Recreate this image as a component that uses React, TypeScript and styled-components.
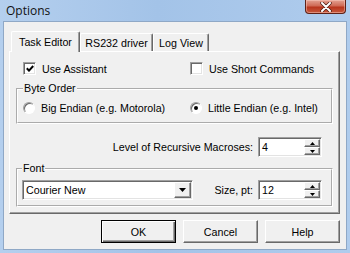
import React from 'react';
import styled, { createGlobalStyle } from 'styled-components';

const GlobalStyle = createGlobalStyle`
  html, body {
    margin: 0;
    padding: 0;
  }
  body {
    width: 350px;
    height: 253px;
    overflow: hidden;
    background: #a9c6e8;
  }
`;

const ui = `'Liberation Sans', Arial, sans-serif`;

const Window = styled.div`
  width: 350px;
  height: 253px;
  box-sizing: border-box;
  display: flex;
  flex-direction: column;
  background: linear-gradient(90deg, #b4cfee 0%, #a3c3e8 45%, #afcced 100%);
  font-family: ${ui};
  font-size: 10.7px;
  color: #000;
`;

const TitleBar = styled.div`
  height: 22px;
  flex: none;
  display: flex;
  align-items: flex-start;
  justify-content: space-between;
`;

const Title = styled.div`
  padding-left: 6px;
  line-height: 21px;
  font-family: 'Open Sans', 'Noto Sans', sans-serif;
  font-size: 12px;
  color: #111;
`;

const CloseButton = styled.div`
  width: 41px;
  height: 14px;
  margin-right: 4px;
  box-sizing: border-box;
  border: 1px solid #5e2117;
  border-top: none;
  border-radius: 0 0 4px 4px;
  background: linear-gradient(180deg, #e3a192 0%, #cf6a55 45%, #b8351d 55%, #c65a3e 100%);
  display: flex;
  align-items: center;
  justify-content: center;
  box-shadow: inset 0 0 0 1px rgba(255, 210, 200, 0.45);
`;

const Client = styled.div`
  flex: 1;
  margin: 0 4px 5px;
  padding: 9px 6px 6px 5px;
  background: #f0f0f0;
  box-shadow: 0 0 0 1px #8fa8c6;
  display: flex;
  flex-direction: column;
`;

const TabStrip = styled.div`
  display: flex;
  align-items: flex-end;
  padding-left: 2px;
`;

const Tab = styled.div<{ $active?: boolean; $w: number }>`
  position: relative;
  z-index: ${(p) => (p.$active ? 1 : 0)};
  width: ${(p) => p.$w}px;
  height: ${(p) => (p.$active ? 21 : 18)}px;
  margin-bottom: ${(p) => (p.$active ? -1 : 0)}px;
  box-sizing: border-box;
  display: flex;
  align-items: center;
  justify-content: center;
  background: #f0f0f0;
  border-top: 1px solid #fff;
  border-left: 1px solid #fff;
  border-right: 1px solid #696969;
  border-radius: 2px 2px 0 0;
  box-shadow: inset -1px 0 0 #a0a0a0;
  white-space: nowrap;
`;

const Panel = styled.div`
  border: 1px solid #fff;
  border-right-color: #696969;
  border-bottom-color: #696969;
  box-shadow: inset -1px -1px 0 #a0a0a0;
  padding: 0 6px 6px;
  display: flex;
  flex-direction: column;
`;

const CheckRow = styled.div`
  display: grid;
  grid-template-columns: 167px 1fr;
  padding-left: 7px;
  margin-top: 10px;
`;

const OptionLabel = styled.label`
  display: flex;
  align-items: center;
  gap: 6px;
  height: 13px;
  white-space: nowrap;
`;

const CheckBox = styled.span`
  width: 13px;
  height: 13px;
  box-sizing: border-box;
  background: #fff;
  border: 1px solid;
  border-color: #a0a0a0 #fff #fff #a0a0a0;
  box-shadow: inset 1px 1px 0 #696969, inset -1px -1px 0 #e3e3e3;
  display: flex;
  align-items: center;
  justify-content: center;
`;

const Radio = styled.span<{ $on?: boolean }>`
  width: 12px;
  height: 12px;
  box-sizing: border-box;
  border-radius: 50%;
  background: #fff;
  border: 1px solid;
  border-color: #a0a0a0 #fff #fff #a0a0a0;
  box-shadow: inset 1px 1px 0 #696969;
  display: flex;
  align-items: center;
  justify-content: center;
  &::after {
    content: '';
    display: ${(p) => (p.$on ? 'block' : 'none')};
    width: 4px;
    height: 4px;
    border-radius: 50%;
    background: #000;
  }
`;

const Group = styled.fieldset<{ $mt: number; $pad: string }>`
  margin: ${(p) => p.$mt}px 0 0;
  padding: ${(p) => p.$pad};
  border: 2px groove #fff;
  min-width: 0;
`;

const Legend = styled.legend`
  padding: 0 1px;
  line-height: 13px;
`;

const RadioRow = styled.div`
  display: grid;
  grid-template-columns: 167px 1fr;
`;

const FieldRow = styled.div<{ $mt?: number; $pr?: number }>`
  display: flex;
  align-items: center;
  margin-top: ${(p) => p.$mt ?? 0}px;
  padding-right: ${(p) => p.$pr ?? 0}px;
`;

const FieldLabel = styled.span`
  margin-left: auto;
  margin-right: 5px;
  white-space: nowrap;
`;

const Sunken = styled.div<{ $w: number }>`
  width: ${(p) => p.$w}px;
  height: 20px;
  box-sizing: border-box;
  background: #fff;
  border: 1px solid;
  border-color: #a0a0a0 #fff #fff #a0a0a0;
  box-shadow: inset 1px 1px 0 #696969, inset -1px -1px 0 #e3e3e3;
  padding: 2px 2px 2px 3px;
  display: flex;
  align-items: center;
`;

const FieldText = styled.span`
  flex: 1;
  line-height: 14px;
`;

const Spinner = styled.div`
  width: 16px;
  height: 16px;
  margin-right: -1px;
  display: flex;
  flex-direction: column;
`;

const SpinButton = styled.div`
  flex: 1;
  box-sizing: border-box;
  background: #f0f0f0;
  border: 1px solid;
  border-color: #fff #696969 #696969 #fff;
  box-shadow: inset -1px -1px 0 #a0a0a0;
  display: flex;
  align-items: center;
  justify-content: center;
`;

const DropButton = styled(SpinButton)`
  flex: none;
  width: 17px;
  height: 16px;
  margin-right: -1px;
`;

const ButtonRow = styled.div`
  display: flex;
  justify-content: flex-end;
  gap: 7px;
  margin-top: 6px;
`;

const Button = styled.div<{ $default?: boolean }>`
  width: 75px;
  height: 23px;
  box-sizing: border-box;
  border: 1px solid;
  border-color: ${(p) => (p.$default ? '#000' : '#fff #696969 #696969 #fff')};
  box-shadow: ${(p) =>
    p.$default
      ? 'inset 1px 1px 0 #fff, inset -1px -1px 0 #696969, inset -2px -2px 0 #a0a0a0'
      : 'inset -1px -1px 0 #a0a0a0'};
  background: #f0f0f0;
  display: flex;
  align-items: center;
  justify-content: center;
`;

const Arrow = ({ up }: { up?: boolean }) => (
  <svg width="5" height="3" viewBox="0 0 5 3">
    <path d={up ? 'M2.5 0 L5 3 L0 3 Z' : 'M0 0 L5 0 L2.5 3 Z'} fill="#000" />
  </svg>
);

const Spin = () => (
  <Spinner>
    <SpinButton>
      <Arrow up />
    </SpinButton>
    <SpinButton>
      <Arrow />
    </SpinButton>
  </Spinner>
);

export default function App() {
  return (
    <>
      <GlobalStyle />
      <Window>
        <TitleBar>
          <Title>Options</Title>
          <CloseButton>
            <svg width="12" height="10" viewBox="0 0 12 10">
              <path d="M2 1 L10 9 M10 1 L2 9" stroke="#4a1a12" strokeWidth="3.4" strokeLinecap="round" />
              <path d="M2 1 L10 9 M10 1 L2 9" stroke="#fff" strokeWidth="2" strokeLinecap="round" />
            </svg>
          </CloseButton>
        </TitleBar>
        <Client>
          <TabStrip>
            <Tab $active $w={69}>Task Editor</Tab>
            <Tab $w={73}>RS232 driver</Tab>
            <Tab $w={56}>Log View</Tab>
          </TabStrip>
          <Panel>
            <CheckRow>
              <OptionLabel>
                <CheckBox>
                  <svg width="8" height="7" viewBox="0 0 8 7">
                    <path d="M0.8 3.2 L3 5.6 L7.2 1" stroke="#000" strokeWidth="2" fill="none" />
                  </svg>
                </CheckBox>
                Use Assistant
              </OptionLabel>
              <OptionLabel>
                <CheckBox />
                Use Short Commands
              </OptionLabel>
            </CheckRow>
            <Group $mt={7} $pad="6px 0 8px 5px">
              <Legend>Byte Order</Legend>
              <RadioRow>
                <OptionLabel>
                  <Radio />
                  Big Endian (e.g. Motorola)
                </OptionLabel>
                <OptionLabel>
                  <Radio $on />
                  Little Endian (e.g. Intel)
                </OptionLabel>
              </RadioRow>
            </Group>
            <FieldRow $mt={13} $pr={11}>
              <FieldLabel>Level of Recursive Macroses:</FieldLabel>
              <Sunken $w={64}>
                <FieldText>4</FieldText>
                <Spin />
              </Sunken>
            </FieldRow>
            <Group $mt={5} $pad="5px 9px 5px 4px">
              <Legend>Font</Legend>
              <FieldRow>
                <Sunken $w={171}>
                  <FieldText>Courier New</FieldText>
                  <DropButton>
                    <svg width="7" height="4" viewBox="0 0 7 4">
                      <path d="M0 0 L7 0 L3.5 4 Z" fill="#000" />
                    </svg>
                  </DropButton>
                </Sunken>
                <FieldLabel>Size, pt:</FieldLabel>
                <Sunken $w={64}>
                  <FieldText>12</FieldText>
                  <Spin />
                </Sunken>
              </FieldRow>
            </Group>
          </Panel>
          <ButtonRow>
            <Button $default>OK</Button>
            <Button>Cancel</Button>
            <Button>Help</Button>
          </ButtonRow>
        </Client>
      </Window>
    </>
  );
}
